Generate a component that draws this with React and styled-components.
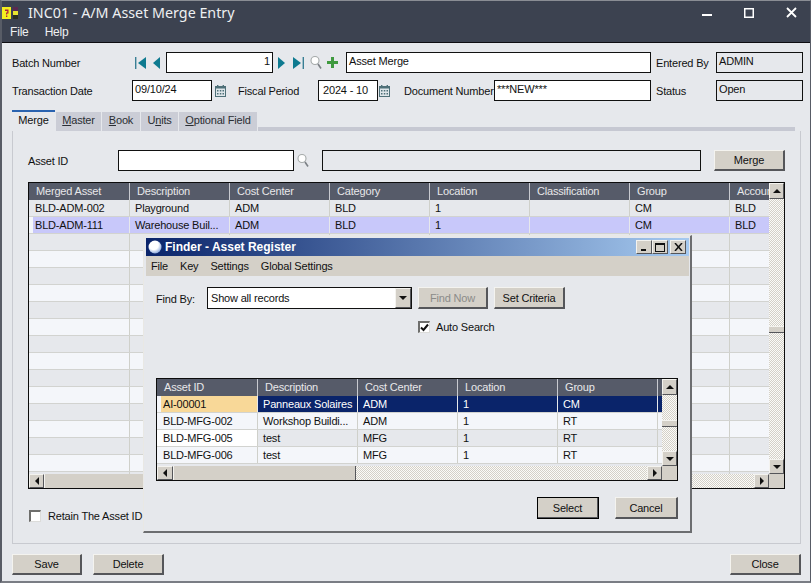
import React from 'react';
import styled, { createGlobalStyle } from 'styled-components';

const Global = createGlobalStyle`
html, body { margin: 0; padding: 0; overflow: hidden; }
body { font-family: "Liberation Sans", Arial, sans-serif; font-size: 11px; letter-spacing: -0.18px; color: #111; }
* { box-sizing: border-box; }
`

const DITHER = 'repeating-conic-gradient(#d4d0c8 0 25%, #fbfbf8 0 50%) 0 0/2px 2px';

const Window = styled.div`
position: relative;
width: 811px;
height: 583px;
background: #e6e8ec;
border-top: 1px solid #8a8d94;
border-left: 2px solid #585c66;
border-right: 1px solid #585c66;
border-bottom: 2px solid #7a7d84;
display: flex;
flex-direction: column;
`

const TitleBar = styled.div`
height: 22px;
background: #3c4250;
color: #eef0f2;
display: flex;
align-items: center;
padding: 1px 0 0 0;
`

const TitleText = styled.span`
font-family: "Noto Sans", sans-serif;
font-size: 14.3px;
letter-spacing: 0;
margin-left: 9px;
flex: 1;
`

const WinButtons = styled.div`
display: flex;
align-items: center;
gap: 32px;
margin-right: 13px;
color: #fff;
`

const MenuBar = styled.div`
height: 20px;
background: #3c4250;
color: #eef0f2;
display: flex;
gap: 16px;
padding: 2px 0 0 8px;
font-size: 12px;
border-bottom: 1px solid #0c0c10;
`

const Form = styled.div`
padding: 9px 0 0 10px;
display: flex;
flex-direction: column;
gap: 7px;
`

const FormRow = styled.div`
display: flex;
align-items: center;
height: 21px;
`

const Label = styled.div`
width: ${(p) => p.$w}px;
flex: none;
white-space: nowrap;
padding-top: 1px;
margin-left: ${(p) => p.$ml || 0}px;
`

const Field = styled.div`
width: ${(p) => p.$w}px;
height: 21px;
flex: none;
border: 1px solid #111;
background: ${(p) => (p.$readonly ? '#e6e8ec' : '#fff')};
padding: ${(p) => (p.$pad ? p.$pad : '1px 2px')};
text-align: ${(p) => (p.$right ? 'right' : 'left')};
line-height: 15px;
white-space: nowrap;
overflow: hidden;
`

const IconSlot = styled.div`
display: flex;
align-items: center;
flex: none;
width: ${(p) => p.$w}px;
padding-left: ${(p) => p.$pl || 0}px;
gap: ${(p) => p.$gap || 0}px;
`

const Tabs = styled.div`
display: flex;
align-items: flex-end;
height: 21px;
margin: 9px 0 0 10px;
width: 783px;
`

const Tab = styled.div`
width: ${(p) => p.$w}px;
height: ${(p) => (p.$active ? 21 : 19)}px;
flex: none;
margin-right: 1px;
text-align: center;
line-height: 17px;
background: ${(p) => (p.$active ? '#e6e8ec' : '#cbcdd6')};
border-top: ${(p) => (p.$active ? '2px solid #2a63b0' : 'none')};
color: ${(p) => (p.$active ? '#111' : '#2a2d33')};
`

const Band = styled.div`
flex: 1;
height: 4px;
background: #c6c8d2;
`

const Panel = styled.div`
margin-left: 10px;
width: 789px;
height: 413px;
border: 1px solid #c8cad0;
border-top: none;
padding: 19px 14px 0 15px;
`

const AssetRow = styled.div`
display: flex;
align-items: center;
height: 21px;
margin-bottom: 11px;
`

const Btn = styled.div`
width: ${(p) => p.$w}px;
height: ${(p) => p.$h || 21}px;
flex: none;
background: #d4d0c8;
border-top: 1px solid #f4f3ef;
border-left: 1px solid #f4f3ef;
border-right: 2px solid #55565a;
border-bottom: 2px solid #55565a;
outline: ${(p) => (p.$def ? '1px solid #000' : 'none')};
outline-offset: -1px;
display: flex;
align-items: center;
justify-content: center;
color: ${(p) => (p.$disabled ? '#8b8b88' : '#111')};
margin-left: ${(p) => p.$ml || 0}px;
`

const GridBox = styled.div`
width: ${(p) => p.$w}px;
height: ${(p) => p.$h}px;
border: 1px solid #0c0c0c;
display: grid;
grid-template-columns: ${(p) => p.$w - 17}px 15px;
grid-template-rows: ${(p) => p.$h - 16}px 14px;
background: #e6e8ec;
flex: none;
`

const Table = styled.div`
overflow: hidden;
min-width: 0;
`

const Row = styled.div`
display: flex;
height: 17px;
line-height: 16px;
background: ${(p) => p.$bg};
border-bottom: 1px solid #d2d3d0;
`

const HeadRow = styled.div`
display: flex;
height: 17px;
line-height: 17px;
background: #565b69;
color: #e8e8ea;
`

const Head = styled.div`
width: ${(p) => p.$w}px;
flex: none;
padding-left: 7px;
border-right: 1px solid #c8cad0;
white-space: nowrap;
overflow: hidden;
`

const Cell = styled.div`
width: ${(p) => p.$w}px;
flex: none;
padding-left: ${(p) => (p.$pl === undefined ? 5 : p.$pl)}px;
white-space: nowrap;
overflow: hidden;
border-right: ${(p) => (p.$flush ? 'none' : `1px solid ${p.$sel ? '#e6e8ec' : '#cfd0ca'}`)};
background: ${(p) => p.$bg || 'transparent'};
color: ${(p) => p.$color || 'inherit'};
`

const VScroll = styled.div`
background: ${DITHER};
display: flex;
flex-direction: column;
justify-content: space-between;
position: relative;
`

const Thumb = styled.div`
position: absolute;
left: 0;
right: 0;
top: ${(p) => p.$top}px;
height: 7px;
background: #d4d0c8;
border-top: 1px solid #f4f3ef;
border-bottom: 1px solid #55565a;
`

const HScroll = styled.div`
background: ${DITHER};
display: flex;
justify-content: space-between;
`

const HThumb = styled.div`
width: ${(p) => p.$w}px;
background: #d4d0c8;
border-left: 1px solid #f4f3ef;
border-right: 1px solid #55565a;
flex: none;
`

const ArrowBtn = styled.div`
width: ${(p) => p.$w || 15}px;
height: ${(p) => p.$h || 15}px;
flex: none;
background: #d4d0c8;
border-top: 1px solid #f4f3ef;
border-left: 1px solid #f4f3ef;
border-right: 1px solid #55565a;
border-bottom: 1px solid #55565a;
display: flex;
align-items: center;
justify-content: center;
`

const Corner = styled.div`
background: #d4d0c8;
`

const HLeft = styled.div`
display: flex;
flex: none;
`

const RetainRow = styled.div`
display: flex;
align-items: center;
gap: 7px;
margin: 21px 0 0 1px;
`

const Check = styled.div`
width: 12px;
height: 12px;
flex: none;
background: #fff;
border: 2px solid #6e6e6c;
border-right: 1px solid #dcdcda;
border-bottom: 1px solid #dcdcda;
display: flex;
align-items: center;
justify-content: center;
`

const Footer = styled.div`
display: flex;
align-items: center;
padding: 10px 9px 0 10px;
`

const Spacer = styled.div`
flex: 1;
`

const Dialog = styled.div`
position: absolute;
left: 141px;
top: 234px;
width: 549px;
height: 298px;
background: #e6e8ec;
border: 1px solid #e9e8e4;
border-right: 2px solid #6c6d70;
border-bottom: 2px solid #6c6d70;
padding: 2px 1px 0 2px;
display: flex;
flex-direction: column;
`

const DlgTitle = styled.div`
height: 18px;
flex: none;
background: linear-gradient(90deg, #0a246a, #a6caf0);
display: flex;
align-items: center;
padding: 0 3px 0 2px;
color: #fff;
font-weight: bold;
font-size: 12px;
`

const DlgTitleText = styled.span`
margin-left: 3px;
flex: 1;
letter-spacing: 0;
`

const DlgBtn = styled(ArrowBtn)`
width: 16px;
height: 14px;
margin-left: ${(p) => p.$ml || 0}px;
`

const DlgMenu = styled.div`
height: 20px;
flex: none;
background: #d4d0c8;
display: flex;
align-items: center;
gap: 12px;
padding-left: 5px;
`

const DlgBody = styled.div`
padding: 11px 11px 0 10px;
flex: 1;
display: flex;
flex-direction: column;
`

const FindRow = styled.div`
display: flex;
align-items: center;
height: 22px;
`

const Select = styled.div`
width: 205px;
height: 22px;
flex: none;
border: 1px solid #111;
background: #fff;
display: flex;
align-items: center;
padding-left: 3px;
`

const SelectText = styled.span`
flex: 1;
`

const AutoRow = styled.div`
display: flex;
align-items: center;
gap: 6px;
margin: 12px 0 46px 262px;
height: 11px;
`

const DlgActions = styled.div`
display: flex;
justify-content: flex-end;
margin-top: 16px;
`

const U = styled.span`
text-decoration: underline;
`

// small drawings
const Tri = ({ dir }) => {
  const pts = { up: '0,5 4,1 8,5', down: '0,1 4,5 8,1', left: '5,0 1,4 5,8', right: '1,0 5,4 1,8' }[dir];
  const size = dir === 'up' || dir === 'down' ? [8, 6] : [6, 8];
  return (
    <svg width={size[0]} height={size[1]} viewBox={`0 0 ${size[0]} ${size[1]}`}>
      <polygon points={pts} fill="#111" />
    </svg>
  );
};

const Nav = ({ dir, bar }) => (
  <svg width="13" height="14" viewBox="0 0 13 14">
    {dir === 'left' ? (
      <g fill="#0e7a90">
        {bar && <rect x="0" y="1" width="1.4" height="12" fill="#3a7f95" />}
        <polygon points={bar ? '11,1 11,13 3,7' : '9,1 9,13 2,7'} />
      </g>
    ) : (
      <g fill="#0e7a90">
        {bar && <rect x="10.6" y="1" width="1.4" height="12" fill="#3a7f95" />}
        <polygon points={bar ? '1,1 1,13 9,7' : '2,1 2,13 9,7'} />
      </g>
    )}
  </svg>
);

const Lens = () => (
  <svg width="12" height="15" viewBox="0 0 12 15">
    <circle cx="5" cy="5.5" r="4" fill="#fff" stroke="#a4a9a9" strokeWidth="1.1" />
    <line x1="8" y1="9" x2="11" y2="13.5" stroke="#7c8186" strokeWidth="1.6" />
  </svg>
);

const Plus = () => (
  <svg width="11" height="11" viewBox="0 0 11 11">
    <path d="M4 0h3v4h4v3H7v4H4V7H0V4h4z" fill="#3f9a3f" />
  </svg>
);

const Calendar = () => (
  <svg width="11" height="12" viewBox="0 0 11 12">
    <rect x="0.5" y="1.5" width="10" height="10" fill="#dfe6ea" stroke="#4f7078" />
    <rect x="0" y="1" width="11" height="2.5" fill="#4f7078" />
    <rect x="2" y="0" width="1.4" height="2" fill="#4f7078" />
    <rect x="7.6" y="0" width="1.4" height="2" fill="#4f7078" />
    <path d="M2 5h1.5v1.5H2zM4.8 5h1.5v1.5H4.8zM7.5 5H9v1.5H7.5zM2 8h1.5v1.5H2zM4.8 8h1.5v1.5H4.8zM7.5 8H9v1.5H7.5z" fill="#4f7078" />
  </svg>
);

const Logo = () => (
  <svg width="17" height="12" viewBox="0 0 17 12">
    <rect x="0" y="0" width="9" height="12" fill="#f4ee20" />
    <path d="M3 2.5h3.5v4H5.2v1H4V5.6h1.2V4H3z" fill="#b02040" />
    <rect x="4" y="8.5" width="1.3" height="1.5" fill="#b02040" />
    <rect x="11" y="0" width="5" height="4" fill="#5a2a50" />
    <rect x="11" y="4" width="5" height="4" fill="#e8e430" />
    <rect x="11" y="8" width="5" height="4" fill="#2c2f20" />
  </svg>
);

const MinIcon = () => (
  <svg width="10" height="10" viewBox="0 0 10 10"><rect x="0" y="6" width="10" height="2" fill="#fff" /></svg>
);
const MaxIcon = () => (
  <svg width="10" height="10" viewBox="0 0 10 10"><rect x="0.75" y="0.75" width="8.5" height="8.5" fill="none" stroke="#fff" strokeWidth="1.5" /></svg>
);
const CloseIcon = () => (
  <svg width="11" height="11" viewBox="0 0 11 11"><path d="M1 1l9 9M10 1l-9 9" stroke="#fff" strokeWidth="1.8" /></svg>
);

const FinderIcon = () => (
  <svg width="14" height="14" viewBox="0 0 14 14">
    <defs>
      <radialGradient id="orb" cx="0.4" cy="0.35" r="0.7">
        <stop offset="0.5" stopColor="#ffffff" />
        <stop offset="1" stopColor="#7f9fd8" />
      </radialGradient>
    </defs>
    <circle cx="7" cy="7" r="6.5" fill="url(#orb)" />
  </svg>
);

const Tick = () => (
  <svg width="9" height="9" viewBox="0 0 9 9"><path d="M1 4.5l2.5 2.5L8 1.5" fill="none" stroke="#111" strokeWidth="2" /></svg>
);

const mainCols = [101, 100, 100, 100, 100, 100, 100, 40];
const mainHead = ['Merged Asset', 'Description', 'Cost Center', 'Category', 'Location', 'Classification', 'Group', 'Account'];
const mainRows = [
  ['BLD-ADM-002', 'Playground', 'ADM', 'BLD', '1', '', 'CM', 'BLD'],
  ['BLD-ADM-111', 'Warehouse Buil...', 'ADM', 'BLD', '1', '', 'CM', 'BLD'],
];
const blankRows = Array.from({ length: 15 }, (_, i) => i);

const finderCols = [101, 100, 100, 100, 100, 5];
const finderHead = ['Asset ID', 'Description', 'Cost Center', 'Location', 'Group', ''];
const finderRows = [
  ['BLD-MFG-002', 'Workshop Buildi...', 'ADM', '1', 'RT', ''],
  ['BLD-MFG-005', 'test', 'MFG', '1', 'RT', ''],
  ['BLD-MFG-006', 'test', 'MFG', '1', 'RT', ''],
];

const zebra = (i) => (i % 2 === 0 ? '#e6e8ec' : '#f4f6fa');

const App = () => {
  return (
    <Window>
      <Global />
      <TitleBar>
        <Logo />
        <TitleText>INC01 - A/M Asset Merge Entry</TitleText>
        <WinButtons>
          <MinIcon />
          <MaxIcon />
          <CloseIcon />
        </WinButtons>
      </TitleBar>
      <MenuBar>
        <span>File</span>
        <span>Help</span>
      </MenuBar>

      <Form>
        <FormRow>
          <Label $w={122}>Batch Number</Label>
          <IconSlot $w={32} $pl={1} $gap={3}>
            <Nav dir="left" bar />
            <Nav dir="left" />
          </IconSlot>
          <Field $w={107} $right>1</Field>
          <IconSlot $w={73} $pl={3}>
            <Nav dir="right" />
            <IconSlot $w={16} $pl={3}><Nav dir="right" bar /></IconSlot>
            <IconSlot $w={22} $pl={5}><Lens /></IconSlot>
            <Plus />
          </IconSlot>
          <Field $w={305}>Asset Merge</Field>
          <Label $w={60} $ml={5}>Entered By</Label>
          <Field $w={87} $readonly>ADMIN</Field>
        </FormRow>
        <FormRow>
          <Label $w={120}>Transaction Date</Label>
          <Field $w={80}>09/10/24</Field>
          <IconSlot $w={26} $pl={3}><Calendar /></IconSlot>
          <Label $w={80}>Fiscal Period</Label>
          <Field $w={60} $pad="2px 4px">2024 - 10</Field>
          <IconSlot $w={26} $pl={1}><Calendar /></IconSlot>
          <Label $w={90}>Document Number</Label>
          <Field $w={157}>***NEW***</Field>
          <Label $w={60} $ml={5}>Status</Label>
          <Field $w={87} $readonly>Open</Field>
        </FormRow>
      </Form>

      <Tabs>
        <Tab $active $w={43}>Merge</Tab>
        <Tab $w={45}><U>M</U>aster</Tab>
        <Tab $w={38}><U>B</U>ook</Tab>
        <Tab $w={37}>U<U>n</U>its</Tab>
        <Tab $w={78}><U>O</U>ptional Field</Tab>
        <Band />
      </Tabs>

      <Panel>
        <AssetRow>
          <Label $w={90}>Asset ID</Label>
          <Field $w={176} />
          <IconSlot $w={28} $pl={3}><Lens /></IconSlot>
          <Field $w={379} $readonly />
          <Btn $w={71} $ml={13}>Merge</Btn>
        </AssetRow>

        <GridBox $w={757} $h={307}>
          <Table>
            <HeadRow>
              {mainHead.map((h, i) => <Head key={h} $w={mainCols[i]}>{h}</Head>)}
            </HeadRow>
            {mainRows.map((r, i) => (
              <Row key={r[0]} $bg={i === 1 ? 'linear-gradient(90deg,#f4f6fa 4px,#c8c8fa 4px)' : '#e6e8ec'}>
                {r.map((c, j) => <Cell key={j} $w={mainCols[j]} $pl={j === 0 ? 6 : 5} $sel={i === 1}>{c}</Cell>)}
              </Row>
            ))}
            {blankRows.map((i) => (
              <Row key={i} $bg={zebra(i)}>
                {mainCols.map((w, j) => <Cell key={j} $w={w} />)}
              </Row>
            ))}
          </Table>
          <VScroll>
            <ArrowBtn $h={16}><Tri dir="up" /></ArrowBtn>
            <Thumb $top={143} />
            <ArrowBtn><Tri dir="down" /></ArrowBtn>
          </VScroll>
          <HScroll>
            <HLeft>
              <ArrowBtn $h={14}><Tri dir="left" /></ArrowBtn>
              <HThumb $w={300} />
            </HLeft>
            <ArrowBtn $h={14}><Tri dir="right" /></ArrowBtn>
          </HScroll>
          <Corner />
        </GridBox>

        <RetainRow>
          <Check />
          <span>Retain The Asset ID</span>
        </RetainRow>
      </Panel>

      <Footer>
        <Btn $w={70}>Save</Btn>
        <Btn $w={71} $ml={11}>Delete</Btn>
        <Spacer />
        <Btn $w={71}>Close</Btn>
      </Footer>

      <Dialog>
        <DlgTitle>
          <FinderIcon />
          <DlgTitleText>Finder - Asset Register</DlgTitleText>
          <DlgBtn><svg width="8" height="8" viewBox="0 0 8 8"><rect x="1" y="6" width="5" height="2" fill="#111" /></svg></DlgBtn>
          <DlgBtn><svg width="10" height="9" viewBox="0 0 10 9"><rect x="0.5" y="0.5" width="9" height="8" fill="none" stroke="#111" /><rect x="0" y="0" width="10" height="2" fill="#111" /></svg></DlgBtn>
          <DlgBtn $ml={2}><svg width="9" height="8" viewBox="0 0 9 8"><path d="M1 0l7 8M8 0L1 8" stroke="#111" strokeWidth="1.5" /></svg></DlgBtn>
        </DlgTitle>
        <DlgMenu>
          <span>File</span>
          <span>Key</span>
          <span>Settings</span>
          <span>Global Settings</span>
        </DlgMenu>
        <DlgBody>
          <FindRow>
            <Label $w={51}>Find By:</Label>
            <Select>
              <SelectText>Show all records</SelectText>
              <ArrowBtn $w={16} $h={20}><Tri dir="down" /></ArrowBtn>
            </Select>
            <Btn $w={70} $h={22} $ml={6} $disabled>Find Now</Btn>
            <Btn $w={71} $h={22} $ml={6}>Set Criteria</Btn>
          </FindRow>
          <AutoRow>
            <Check><Tick /></Check>
            <span>Auto Search</span>
          </AutoRow>
          <GridBox $w={522} $h={103}>
            <Table>
              <HeadRow>
                {finderHead.map((h, i) => <Head key={i} $w={finderCols[i]}>{h}</Head>)}
              </HeadRow>
              <Row $bg="#0a246a">
                <Cell $w={4} $bg="#f4f6fa" $pl={0} $flush />
                <Cell $w={97} $bg="#f8d898" $pl={2} $sel>AI-00001</Cell>
                <Cell $w={100} $color="#fff" $sel>Panneaux Solaires</Cell>
                <Cell $w={100} $color="#fff" $sel>ADM</Cell>
                <Cell $w={100} $color="#fff" $sel>1</Cell>
                <Cell $w={100} $color="#fff" $sel>CM</Cell>
                <Cell $w={5} $sel />
              </Row>
              {finderRows.map((r, i) => (
                <Row key={r[0]} $bg={zebra(i + 1)}>
                  {r.map((c, j) => (
                    <Cell key={j} $w={finderCols[j]} $pl={j === 0 ? 6 : 5} $bg={j === 0 ? (i === 1 ? '#fff' : '#f4f6fa') : undefined}>{c}</Cell>
                  ))}
                </Row>
              ))}
            </Table>
            <VScroll>
              <ArrowBtn $h={16}><Tri dir="up" /></ArrowBtn>
              <Thumb $top={41} />
              <ArrowBtn><Tri dir="down" /></ArrowBtn>
            </VScroll>
            <HScroll>
              <HLeft>
                <ArrowBtn $w={16} $h={14}><Tri dir="left" /></ArrowBtn>
                <HThumb $w={183} />
              </HLeft>
              <ArrowBtn $h={14}><Tri dir="right" /></ArrowBtn>
            </HScroll>
            <Corner />
          </GridBox>
          <DlgActions>
            <Btn $w={62} $h={22} $def>Select</Btn>
            <Btn $w={63} $h={22} $ml={16}>Cancel</Btn>
          </DlgActions>
        </DlgBody>
      </Dialog>
    </Window>
  );
};

export default App;
